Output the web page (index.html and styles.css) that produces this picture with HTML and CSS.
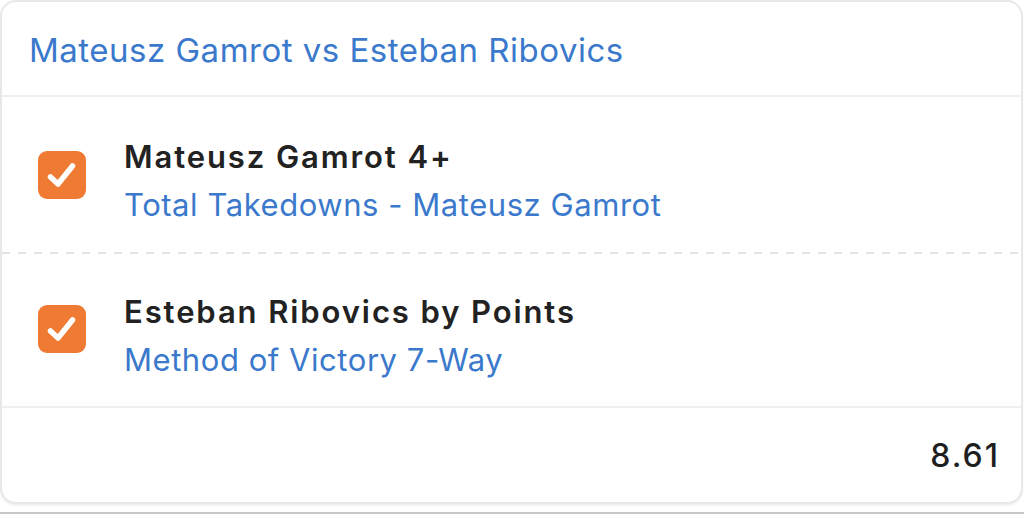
FILE: index.html
```html
<!DOCTYPE html>
<html>
<head>
<meta charset="utf-8">
<link rel="stylesheet" href="styles.css">
</head>
<body>
<div class="card">
  <div class="card-header">Mateusz Gamrot vs Esteban Ribovics</div>
  <div class="selection">
    <div class="check">
      <svg viewBox="0 0 48 48" width="48" height="48"><path d="M12.5 26 L20 33 L34.5 15" fill="none" stroke="#fff" stroke-width="5.5" stroke-linecap="round" stroke-linejoin="round"/></svg>
    </div>
    <div class="sel-text">
      <div class="sel-title">Mateusz Gamrot 4+</div>
      <div class="sel-market">Total Takedowns - Mateusz Gamrot</div>
    </div>
  </div>
  <div class="selection dashed">
    <div class="check">
      <svg viewBox="0 0 48 48" width="48" height="48"><path d="M12.5 26 L20 33 L34.5 15" fill="none" stroke="#fff" stroke-width="5.5" stroke-linecap="round" stroke-linejoin="round"/></svg>
    </div>
    <div class="sel-text">
      <div class="sel-title">Esteban Ribovics by Points</div>
      <div class="sel-market">Method of Victory 7-Way</div>
    </div>
  </div>
  <div class="card-footer">8.61</div>
</div>
<div class="next-card"></div>
</body>
</html>
```

FILE: styles.css
```css
html, body {
  margin: 0;
  padding: 0;
  background: #ffffff;
  font-family: Inter, "Open Sans", "Liberation Sans", sans-serif;
}

.card {
  box-sizing: border-box;
  width: 1023px;
  height: 504px;
  border: 2px solid #e8e8e8;
  border-radius: 16px;
  background: #fff;
  box-shadow: 0 2px 2px rgba(0,0,0,0.06);
  display: flex;
  flex-direction: column;
  overflow: hidden;
}

.card-header {
  height: 95px;
  box-sizing: border-box;
  padding: 2px 0 0 27px;
  display: flex;
  align-items: center;
  font-size: 33px;
  color: #3a79cb;
  border-bottom: 2px solid #efefef;
  letter-spacing: 0.5px;
}

.selection {
  height: 155px;
  box-sizing: border-box;
  display: flex;
  align-items: center;
  padding-left: 36px;
}

.selection.dashed {
  height: 156px;
  background-image: linear-gradient(to right, #e4e4e4 50%, transparent 50%);
  background-size: 16px 2px;
  background-repeat: repeat-x;
  background-position: 0 0;
  border-bottom: 2px solid #efefef;
}

.check {
  width: 48px;
  height: 48px;
  border-radius: 9px;
  background: #ee7a33;
  flex: none;
  display: flex;
}

.sel-text {
  margin-left: 38px;
  padding-top: 13px;
  display: flex;
  flex-direction: column;
  gap: 12px;
}

.sel-title {
  font-size: 31px;
  font-weight: 600;
  color: #222222;
  line-height: 36px;
  letter-spacing: 1.9px;
}

.sel-market {
  font-size: 31px;
  color: #3a79cb;
  line-height: 36px;
  letter-spacing: 0.55px;
}

.card-footer {
  flex: 1;
  display: flex;
  align-items: center;
  justify-content: flex-end;
  padding-right: 21px;
  font-size: 32px;
  font-weight: 500;
  color: #1f1f1f;
  letter-spacing: 2px;
}

.next-card {
  margin-top: 8px;
  height: 2px;
  background: #c8c8c8;
}
```
